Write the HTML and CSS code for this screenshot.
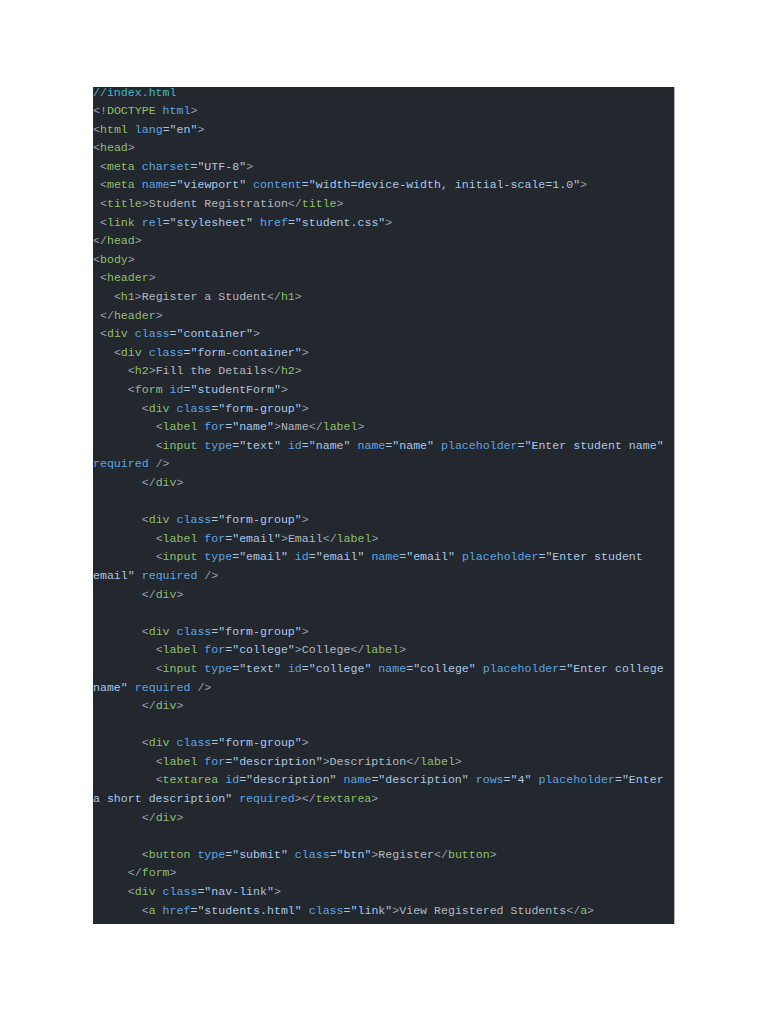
FILE: index.html
```html
<!DOCTYPE html>
<html lang="en">
<head>
<meta charset="UTF-8">
<title>index.html</title>
<link rel="stylesheet" href="styles.css">
</head>
<body>
<div class="page">
<div class="panel">
<pre class="code"><span class="c">//index.html</span>
<span class="p">&lt;!</span><span class="t">DOCTYPE</span> <span class="a">html</span><span class="p">&gt;</span>
<span class="p">&lt;</span><span class="t">html</span> <span class="a">lang</span><span class="s">="en"</span><span class="p">&gt;</span>
<span class="p">&lt;</span><span class="t">head</span><span class="p">&gt;</span>
 <span class="p">&lt;</span><span class="t">meta</span> <span class="a">charset</span><span class="s">="UTF-8"</span><span class="p">&gt;</span>
 <span class="p">&lt;</span><span class="t">meta</span> <span class="a">name</span><span class="s">="viewport"</span> <span class="a">content</span><span class="s">="width=device-width, initial-scale=1.0"</span><span class="p">&gt;</span>
 <span class="p">&lt;</span><span class="t">title</span><span class="p">&gt;</span><span class="x">Student Registration</span><span class="p">&lt;/</span><span class="t">title</span><span class="p">&gt;</span>
 <span class="p">&lt;</span><span class="t">link</span> <span class="a">rel</span><span class="s">="stylesheet"</span> <span class="a">href</span><span class="s">="student.css"</span><span class="p">&gt;</span>
<span class="p">&lt;/</span><span class="t">head</span><span class="p">&gt;</span>
<span class="p">&lt;</span><span class="t">body</span><span class="p">&gt;</span>
 <span class="p">&lt;</span><span class="t">header</span><span class="p">&gt;</span>
   <span class="p">&lt;</span><span class="t">h1</span><span class="p">&gt;</span><span class="x">Register a Student</span><span class="p">&lt;/</span><span class="t">h1</span><span class="p">&gt;</span>
 <span class="p">&lt;/</span><span class="t">header</span><span class="p">&gt;</span>
 <span class="p">&lt;</span><span class="t">div</span> <span class="a">class</span><span class="s">="container"</span><span class="p">&gt;</span>
   <span class="p">&lt;</span><span class="t">div</span> <span class="a">class</span><span class="s">="form-container"</span><span class="p">&gt;</span>
     <span class="p">&lt;</span><span class="t">h2</span><span class="p">&gt;</span><span class="x">Fill the Details</span><span class="p">&lt;/</span><span class="t">h2</span><span class="p">&gt;</span>
     <span class="p">&lt;</span><span class="t">form</span> <span class="a">id</span><span class="s">="studentForm"</span><span class="p">&gt;</span>
       <span class="p">&lt;</span><span class="t">div</span> <span class="a">class</span><span class="s">="form-group"</span><span class="p">&gt;</span>
         <span class="p">&lt;</span><span class="t">label</span> <span class="a">for</span><span class="s">="name"</span><span class="p">&gt;</span><span class="x">Name</span><span class="p">&lt;/</span><span class="t">label</span><span class="p">&gt;</span>
         <span class="p">&lt;</span><span class="t">input</span> <span class="a">type</span><span class="s">="text"</span> <span class="a">id</span><span class="s">="name"</span> <span class="a">name</span><span class="s">="name"</span> <span class="a">placeholder</span><span class="s">="Enter student name"</span> <span class="a">required</span> <span class="p">/&gt;</span>
       <span class="p">&lt;/</span><span class="t">div</span><span class="p">&gt;</span>

       <span class="p">&lt;</span><span class="t">div</span> <span class="a">class</span><span class="s">="form-group"</span><span class="p">&gt;</span>
         <span class="p">&lt;</span><span class="t">label</span> <span class="a">for</span><span class="s">="email"</span><span class="p">&gt;</span><span class="x">Email</span><span class="p">&lt;/</span><span class="t">label</span><span class="p">&gt;</span>
         <span class="p">&lt;</span><span class="t">input</span> <span class="a">type</span><span class="s">="email"</span> <span class="a">id</span><span class="s">="email"</span> <span class="a">name</span><span class="s">="email"</span> <span class="a">placeholder</span><span class="s">="Enter student </span><span class="s">email"</span> <span class="a">required</span> <span class="p">/&gt;</span>
       <span class="p">&lt;/</span><span class="t">div</span><span class="p">&gt;</span>

       <span class="p">&lt;</span><span class="t">div</span> <span class="a">class</span><span class="s">="form-group"</span><span class="p">&gt;</span>
         <span class="p">&lt;</span><span class="t">label</span> <span class="a">for</span><span class="s">="college"</span><span class="p">&gt;</span><span class="x">College</span><span class="p">&lt;/</span><span class="t">label</span><span class="p">&gt;</span>
         <span class="p">&lt;</span><span class="t">input</span> <span class="a">type</span><span class="s">="text"</span> <span class="a">id</span><span class="s">="college"</span> <span class="a">name</span><span class="s">="college"</span> <span class="a">placeholder</span><span class="s">="Enter college </span><span class="s">name"</span> <span class="a">required</span> <span class="p">/&gt;</span>
       <span class="p">&lt;/</span><span class="t">div</span><span class="p">&gt;</span>

       <span class="p">&lt;</span><span class="t">div</span> <span class="a">class</span><span class="s">="form-group"</span><span class="p">&gt;</span>
         <span class="p">&lt;</span><span class="t">label</span> <span class="a">for</span><span class="s">="description"</span><span class="p">&gt;</span><span class="x">Description</span><span class="p">&lt;/</span><span class="t">label</span><span class="p">&gt;</span>
         <span class="p">&lt;</span><span class="t">textarea</span> <span class="a">id</span><span class="s">="description"</span> <span class="a">name</span><span class="s">="description"</span> <span class="a">rows</span><span class="s">="4"</span> <span class="a">placeholder</span><span class="s">="Enter </span><span class="s">a short description"</span> <span class="a">required</span><span class="p">&gt;&lt;/</span><span class="t">textarea</span><span class="p">&gt;</span>
       <span class="p">&lt;/</span><span class="t">div</span><span class="p">&gt;</span>

       <span class="p">&lt;</span><span class="t">button</span> <span class="a">type</span><span class="s">="submit"</span> <span class="a">class</span><span class="s">="btn"</span><span class="p">&gt;</span><span class="x">Register</span><span class="p">&lt;/</span><span class="t">button</span><span class="p">&gt;</span>
     <span class="p">&lt;/</span><span class="t">form</span><span class="p">&gt;</span>
     <span class="p">&lt;</span><span class="t">div</span> <span class="a">class</span><span class="s">="nav-link"</span><span class="p">&gt;</span>
       <span class="p">&lt;</span><span class="t">a</span> <span class="a">href</span><span class="s">="students.html"</span> <span class="a">class</span><span class="s">="link"</span><span class="p">&gt;</span><span class="x">View Registered Students</span><span class="p">&lt;/</span><span class="t">a</span><span class="p">&gt;</span></pre>
</div>
</div>
</body>
</html>
```

FILE: styles.css
```css
html, body {
  margin: 0;
  padding: 0;
  background: #ffffff;
}

.page {
  padding: 87px 0 0 93px;
}

.panel {
  width: 581px;
  background: #23272e;
  border-right: 1px solid #b4b7bc;
  overflow: hidden;
  padding-bottom: 4px;
}

.code {
  margin: -3.5px 0 0 0;
  font-family: "Liberation Mono", "Courier New", monospace;
  font-size: 11.6px;
  line-height: 18.6px;
  white-space: pre-wrap;
  color: #abb2bf;
}

.c { color: #45b9c6; }
.p { color: #9aa1ad; }
.t { color: #8fbf6e; }
.a { color: #5ca4e0; }
.s { color: #a9c6e6; }
.x { color: #b3b8c0; }
```
